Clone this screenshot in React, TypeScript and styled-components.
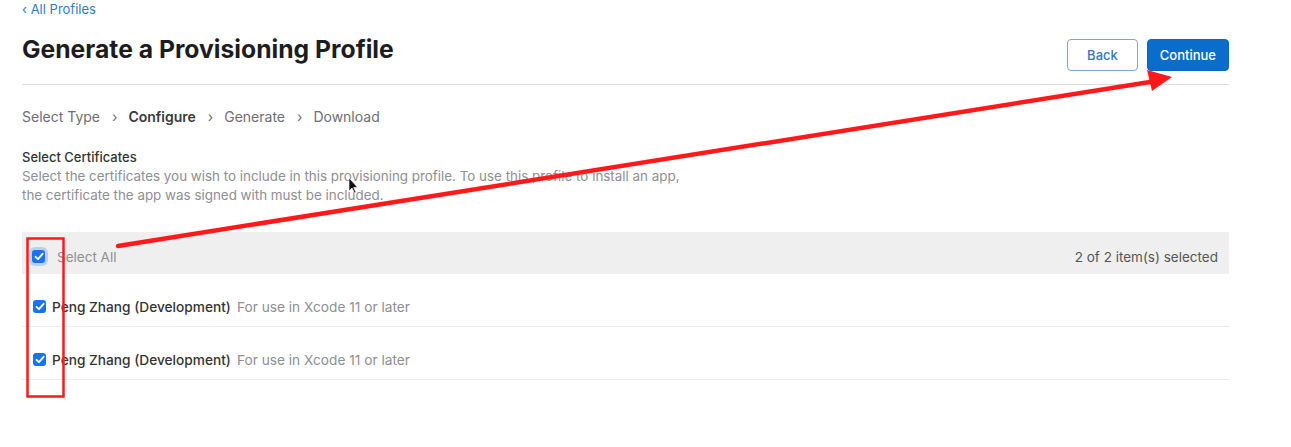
import React from "react";
import styled, { createGlobalStyle } from "styled-components";

const Global = createGlobalStyle`
  html, body { margin: 0; padding: 0; background: #fff; }
  body { font-family: Inter, "Liberation Sans", Arial, sans-serif; color: #1d1d1f; }
`;

const Page = styled.div`
  position: relative;
  width: 1291px;
  height: 447px;
  overflow: hidden;
  background: #fff;
`;

const Content = styled.div`
  width: 1207px;
  margin-left: 22px;
  display: flex;
  flex-direction: column;
`;

const BackLink = styled.a`
  font-size: 13px;
  color: #2f7cc4;
  text-decoration: none;
  line-height: 18px;
`;

const HeaderRow = styled.div`
  display: flex;
  align-items: flex-start;
  justify-content: space-between;
  padding-bottom: 13px;
  border-bottom: 1px solid #dcdcdc;
`;

const Title = styled.h1`
  margin: 16px 0 0 0;
  font-size: 24.7px;
  font-weight: 700;
  letter-spacing: 0px;
  line-height: 30px;
  color: #1d1d1f;
`;

const Buttons = styled.div`
  display: flex;
  gap: 9px;
  margin-top: 21px;
`;

const Button = styled.button<{ $primary?: boolean }>`
  height: 32px;
  padding: 0 ${(p) => (p.$primary ? "12px" : "19px")};
  border-radius: 4px;
  font-family: inherit;
  font-size: 13px;
  font-weight: 500;
  cursor: pointer;
  border: 1px solid ${(p) => (p.$primary ? "#0868c4" : "#7fa6cf")};
  background: ${(p) => (p.$primary ? "#0a6ccb" : "#fff")};
  color: ${(p) => (p.$primary ? "#fff" : "#3a76b5")};
`;

const Steps = styled.div`
  display: flex;
  align-items: center;
  margin-top: 23px;
  font-size: 14px;
  color: #6e6e73;
  line-height: 18px;
`;

const Step = styled.span<{ $active?: boolean }>`
  font-weight: ${(p) => (p.$active ? 600 : 400)};
  color: ${(p) => (p.$active ? "#3a3a3c" : "#6e6e73")};
`;

const Chevron = styled.span`
  margin: 0 11px 0 12px;
  color: #6e6e73;
  font-size: 14px;
`;

const SectionTitle = styled.div`
  margin-top: 22px;
  font-size: 13px;
  font-weight: 500;
  color: #333;
  line-height: 18px;
`;

const Desc = styled.p`
  margin: 1px 0 0 0;
  width: 675px;
  font-size: 13.4px;
  color: #8e8e93;
  line-height: 19px;
`;

const Table = styled.div`
  margin-top: 27px;
  display: flex;
  flex-direction: column;
`;

const HeadRow = styled.div`
  display: flex;
  align-items: center;
  justify-content: space-between;
  height: 42px;
  background: #efefef;
  padding: 7px 11px 0 10px;
  box-sizing: border-box;
`;

const Row = styled.div`
  display: flex;
  align-items: center;
  height: 53px;
  border-bottom: 1px solid #ececec;
  padding-left: 11px;
  padding-top: 13px;
  box-sizing: border-box;
`;

const Check = styled.span<{ $halo?: boolean }>`
  width: 13px;
  height: 13px;
  border-radius: 3px;
  background: #1a73e8;
  display: inline-flex;
  align-items: center;
  justify-content: center;
  box-shadow: ${(p) => (p.$halo ? "0 0 0 3px rgba(26,115,232,0.25)" : "none")};
  flex: none;
`;

const Group = styled.div`
  display: flex;
  align-items: center;
`;

const Label = styled.span<{ $muted?: boolean }>`
  margin-left: ${(p) => (p.$muted ? "12px" : "6px")};
  font-size: ${(p) => (p.$muted ? "13.5px" : "13.7px")};
  color: ${(p) => (p.$muted ? "#8e8e93" : "#333")};
  font-weight: ${(p) => (p.$muted ? 400 : 500)};
`;

const Sub = styled.span`
  margin-left: 6px;
  font-size: 13.7px;
  color: #8e8e93;
`;

const Count = styled.span`
  font-size: 13.5px;
  color: #555;
`;

const Overlay = styled.svg`
  position: absolute;
  left: 0;
  top: 0;
  pointer-events: none;
`;

const Tick = () => (
  <svg width="10" height="9" viewBox="0 0 10 9">
    <path d="M1.5 4.8 L4 7.2 L8.6 1.8" fill="none" stroke="#fff" strokeWidth="1.8" strokeLinecap="round" strokeLinejoin="round" />
  </svg>
);

export default function App() {
  return (
    <Page>
      <Global />
      <Content>
        <BackLink>‹ All Profiles</BackLink>
        <HeaderRow>
          <Title>Generate a Provisioning Profile</Title>
          <Buttons>
            <Button>Back</Button>
            <Button $primary>Continue</Button>
          </Buttons>
        </HeaderRow>
        <Steps>
          <Step>Select Type</Step>
          <Chevron>›</Chevron>
          <Step $active>Configure</Step>
          <Chevron>›</Chevron>
          <Step>Generate</Step>
          <Chevron>›</Chevron>
          <Step>Download</Step>
        </Steps>
        <SectionTitle>Select Certificates</SectionTitle>
        <Desc>
          Select the certificates you wish to include in this provisioning profile. To use this profile to install an app,
          the certificate the app was signed with must be included.
        </Desc>
        <Table>
          <HeadRow>
            <Group>
              <Check $halo><Tick /></Check>
              <Label $muted>Select All</Label>
            </Group>
            <Count>2 of 2 item(s) selected</Count>
          </HeadRow>
          <Row>
            <Check><Tick /></Check>
            <Label>Peng Zhang (Development)</Label>
            <Sub>For use in Xcode 11 or later</Sub>
          </Row>
          <Row>
            <Check><Tick /></Check>
            <Label>Peng Zhang (Development)</Label>
            <Sub>For use in Xcode 11 or later</Sub>
          </Row>
        </Table>
      </Content>
      <Overlay width="1291" height="447" viewBox="0 0 1291 447">
        <rect x="27.5" y="238.5" width="36" height="158" fill="none" stroke="#ff1a1a" strokeWidth="2.5" />
        <line x1="118" y1="246" x2="1150" y2="82" stroke="#ff1a1a" strokeWidth="4.5" strokeLinecap="round" />
        <polygon points="1172,77 1147,70 1152,91" fill="#ff1a1a" />
        <path d="M349 178 L349 191 L352 188 L354.5 193 L356 192.3 L353.6 187.5 L357.5 187.2 Z" fill="#111" stroke="#fff" strokeWidth="0.6" />
      </Overlay>
    </Page>
  );
}
